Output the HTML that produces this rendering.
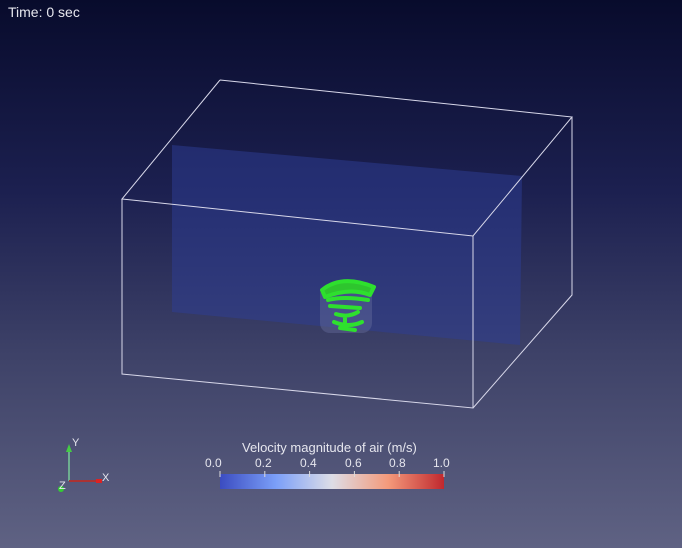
<!DOCTYPE html><html><head><style>
body{margin:0;width:682px;height:548px;overflow:hidden;background:linear-gradient(#080b2c 0%,#1c2050 35%,#3e4268 65%,#5f6283 100%);font-family:"Liberation Sans",sans-serif;}
.t{position:absolute;color:#e6e6ee;font-size:13px}
</style></head><body>
<div class="t" style="left:8px;top:4px;font-size:14px">Time: 0 sec</div>
<svg width="682" height="548" style="position:absolute;left:0;top:0">
<defs><linearGradient id="cb" x1="0" x2="1"><stop offset="0" stop-color="#3b4cc0"/><stop offset=".25" stop-color="#7b9ff9"/><stop offset=".5" stop-color="#dddde6"/><stop offset=".75" stop-color="#f49a7b"/><stop offset="1" stop-color="#c0282e"/></linearGradient></defs>
<polygon points="172,145 522,176 520,345 172,312" fill="#2e3d95" opacity=".5"/>
<g stroke="#d8d8ea" stroke-width="1" fill="none">
<polyline points="220,80 572,117 473,236 122,199 220,80"/>
<polyline points="122,199 122,374 473,408 473,236"/>
<polyline points="572,117 572,295 473,408"/>
</g>
<rect x="320" y="285" width="52" height="48" rx="10" fill="#6870a0" opacity=".4"/>
<g fill="none" stroke="#2ee02e" stroke-width="4" stroke-linecap="round" stroke-linejoin="round">
<path d="M322,290 q20,-16 52,-3 l-4,8 q-20,-8 -45,2z" fill="#2ec52e"/>
<path d="M328,300 q15,-4 40,0 M330,306 l30,2 M336,314 q12,4 22,-2 M334,322 q15,6 28,0 M340,328 l15,2 M345,318 l0,8"/>
</g>
<rect x="220" y="474" width="224" height="15" fill="url(#cb)"/>
<g stroke="#ddd" stroke-width="1"><path d="M220,471v6M264.8,471v6M309.6,471v6M354.4,471v6M399.2,471v6M444,471v6"/></g>
<line x1="69" y1="481" x2="69" y2="448" stroke="#7c9" stroke-width="1.5"/><path d="M66,452l3,-8 3,8z" fill="#4c4"/>
<line x1="69" y1="481" x2="100" y2="481" stroke="#a33" stroke-width="2"/><rect x="96" y="479" width="6" height="4" fill="#d22"/>
<circle cx="61" cy="489" r="3" fill="#3c3"/>
</svg>
<div class="t" style="left:242px;top:440px">Velocity magnitude of air (m/s)</div>
<div class="t" style="left:205px;top:456px;width:260px;font-size:12px"><span style="position:absolute;left:0">0.0</span><span style="position:absolute;left:50px">0.2</span><span style="position:absolute;left:95px">0.4</span><span style="position:absolute;left:140px">0.6</span><span style="position:absolute;left:184px">0.8</span><span style="position:absolute;left:228px">1.0</span></div>
<div class="t" style="left:72px;top:437px;font-size:11px">Y</div>
<div class="t" style="left:102px;top:472px;font-size:11px">X</div>
<div class="t" style="left:59px;top:480px;font-size:11px">Z</div>
</body></html>
